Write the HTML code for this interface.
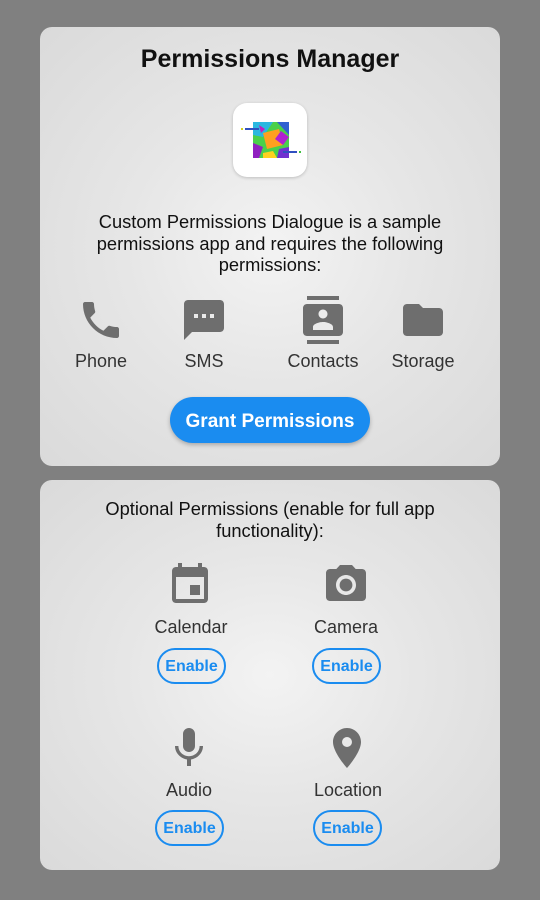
<!DOCTYPE html>
<html><head><meta charset="utf-8"><style>
*{margin:0;padding:0;box-sizing:border-box}
body{width:540px;height:900px;background:#808080;position:relative;overflow:hidden;font-family:"Liberation Sans",Roboto,sans-serif;color:#222}
.card{position:absolute;left:40px;width:460px;border-radius:12px;background:radial-gradient(ellipse at 50% 50%,#f3f3f3 0%,#e6e6e6 45%,#dadada 100%)}
.a{position:absolute;text-align:center}
svg{position:absolute;fill:#6e6e6e}
.lbl{position:absolute;font-size:18px;color:#333;transform:translateX(-50%);white-space:nowrap}
.en{position:absolute;width:69px;height:36px;border:2px solid #1a8cf0;border-radius:18px;color:#1a8cf0;font-weight:bold;font-size:16px;line-height:34px;text-align:center}
</style></head><body>
<div class="card" style="top:27px;height:439px"></div>
<div class="card" style="top:480px;height:390px"></div>

<div class="a" style="left:40px;width:460px;top:45px;font-size:25px;font-weight:bold;color:#111">Permissions Manager</div>
<div style="position:absolute;left:233px;top:103px;width:74px;height:74px;background:#fff;border-radius:14px;box-shadow:0 1px 3px rgba(0,0,0,.2)"></div>
<svg viewBox="0 0 74 74" width="74" height="74" style="left:233px;top:103px">
<rect x="20" y="19" width="36" height="36" fill="#4ad04a"/>
<polygon points="20,19 40,19 30,34 20,32" fill="#2bb8e0"/>
<polygon points="30,30 46,26 50,42 34,46" fill="#ffa020"/>
<polygon points="44,19 56,19 56,32" fill="#3060d0"/>
<polygon points="48,28 56,34 50,42 42,36" fill="#b020d0"/>
<polygon points="20,40 30,44 26,55 20,55" fill="#9020c0"/>
<polygon points="46,46 56,44 56,55 44,55" fill="#7030d0"/>
<polygon points="30,50 40,48 44,55 30,55" fill="#ffd020"/>
<polygon points="26,22 32,26 28,30" fill="#c020c0"/>
<rect x="12" y="25" width="14" height="2" fill="#3050c0"/>
<rect x="8" y="25" width="2" height="2" fill="#d0d020"/>
<rect x="50" y="48" width="14" height="2" fill="#3050c0"/>
<rect x="66" y="48" width="2" height="2" fill="#40c040"/>
</svg>

<div class="a" style="left:40px;width:460px;top:211px;font-size:18.3px;line-height:21.5px;color:#111">Custom Permissions Dialogue is a sample<br>permissions app and requires the following<br>permissions:</div>

<svg viewBox="0 0 24 24" width="48" height="48" style="left:77px;top:296px"><path d="M6.62 10.79c1.44 2.83 3.76 5.14 6.59 6.59l2.2-2.2c.27-.27.67-.36 1.02-.24 1.12.37 2.33.57 3.57.57.55 0 1 .45 1 1V20c0 .55-.45 1-1 1-9.39 0-17-7.61-17-17 0-.55.45-1 1-1h3.5c.55 0 1 .45 1 1 0 1.25.2 2.45.57 3.57.11.35.03.74-.25 1.02l-2.2 2.2z"/></svg>
<svg viewBox="0 0 24 24" width="48" height="48" style="left:180px;top:296px"><path d="M20 2H4c-1.1 0-1.99.9-1.99 2L2 22l4-4h14c1.1 0 2-.9 2-2V4c0-1.1-.9-2-2-2zM9 11H7V9h2v2zm4 0h-2V9h2v2zm4 0h-2V9h2v2z"/></svg>
<svg viewBox="0 0 24 24" width="48" height="48" style="left:299px;top:296px"><path d="M20 0H4v2h16V0zM4 24h16v-2H4v2zM20 4H4c-1.1 0-2 .9-2 2v12c0 1.1.9 2 2 2h16c1.1 0 2-.9 2-2V6c0-1.1-.9-2-2-2zm-8 2.75c1.24 0 2.25 1.01 2.25 2.25s-1.01 2.25-2.25 2.25S9.75 10.24 9.75 9 10.76 6.75 12 6.75zM17 17H7v-1.5c0-1.67 3.33-2.5 5-2.5s5 .83 5 2.5V17z"/></svg>
<svg viewBox="0 0 24 24" width="48" height="48" style="left:399px;top:296px"><path d="M10 4H4c-1.1 0-1.99.9-1.99 2L2 18c0 1.1.9 2 2 2h16c1.1 0 2-.9 2-2V8c0-1.1-.9-2-2-2h-8l-2-2z"/></svg>
<div class="lbl" style="left:101px;top:351px">Phone</div>
<div class="lbl" style="left:204px;top:351px">SMS</div>
<div class="lbl" style="left:323px;top:351px">Contacts</div>
<div class="lbl" style="left:423px;top:351px">Storage</div>

<div style="position:absolute;left:170px;top:397px;width:200px;height:46px;border-radius:23px;background:#1a8cf0;color:#fff;font-size:19px;font-weight:bold;text-align:center;line-height:50px;box-shadow:0 2px 4px rgba(0,0,0,.25)">Grant Permissions</div>

<div class="a" style="left:40px;width:460px;top:498px;font-size:18.3px;line-height:21.5px;color:#111">Optional Permissions (enable for full app<br>functionality):</div>

<svg viewBox="0 0 24 24" width="48" height="48" style="left:166px;top:561px"><path d="M17 12h-5v5h5v-5zM16 1v2H8V1H6v2H5c-1.11 0-1.99.9-1.99 2L3 19c0 1.1.89 2 2 2h14c1.1 0 2-.9 2-2V5c0-1.1-.9-2-2-2h-1V1h-2zm3 18H5V8h14v11z"/></svg>
<svg viewBox="0 0 24 24" width="48" height="48" style="left:322px;top:561px"><circle cx="12" cy="12" r="3.2"/><path d="M9 2L7.17 4H4c-1.1 0-2 .9-2 2v12c0 1.1.9 2 2 2h16c1.1 0 2-.9 2-2V6c0-1.1-.9-2-2-2h-3.17L15 2H9zm3 15c-2.76 0-5-2.24-5-5s2.24-5 5-5 5 2.24 5 5-2.24 5-5 5z"/></svg>
<div class="lbl" style="left:191px;top:617px">Calendar</div>
<div class="lbl" style="left:346px;top:617px">Camera</div>
<div class="en" style="left:157px;top:648px">Enable</div>
<div class="en" style="left:312px;top:648px">Enable</div>

<svg viewBox="0 0 24 24" width="48" height="48" style="left:165px;top:724px"><path d="M12 14c1.66 0 2.99-1.34 2.99-3L15 5c0-1.66-1.34-3-3-3S9 3.34 9 5v6c0 1.66 1.34 3 3 3zm5.3-3c0 3-2.54 5.1-5.3 5.1S6.7 14 6.7 11H5c0 3.41 2.72 6.23 6 6.72V21h2v-3.28c3.28-.48 6-3.3 6-6.72h-1.7z"/></svg>
<svg viewBox="0 0 24 24" width="48" height="48" style="left:323px;top:724px"><path d="M12 2C8.13 2 5 5.13 5 9c0 5.25 7 13 7 13s7-7.75 7-13c0-3.870-3.13-7-7-7zm0 9.5a2.5 2.5 0 0 1 0-5 2.5 2.5 0 0 1 0 5z"/></svg>
<div class="lbl" style="left:189px;top:780px">Audio</div>
<div class="lbl" style="left:348px;top:780px">Location</div>
<div class="en" style="left:155px;top:810px">Enable</div>
<div class="en" style="left:313px;top:810px">Enable</div>
</body></html>
